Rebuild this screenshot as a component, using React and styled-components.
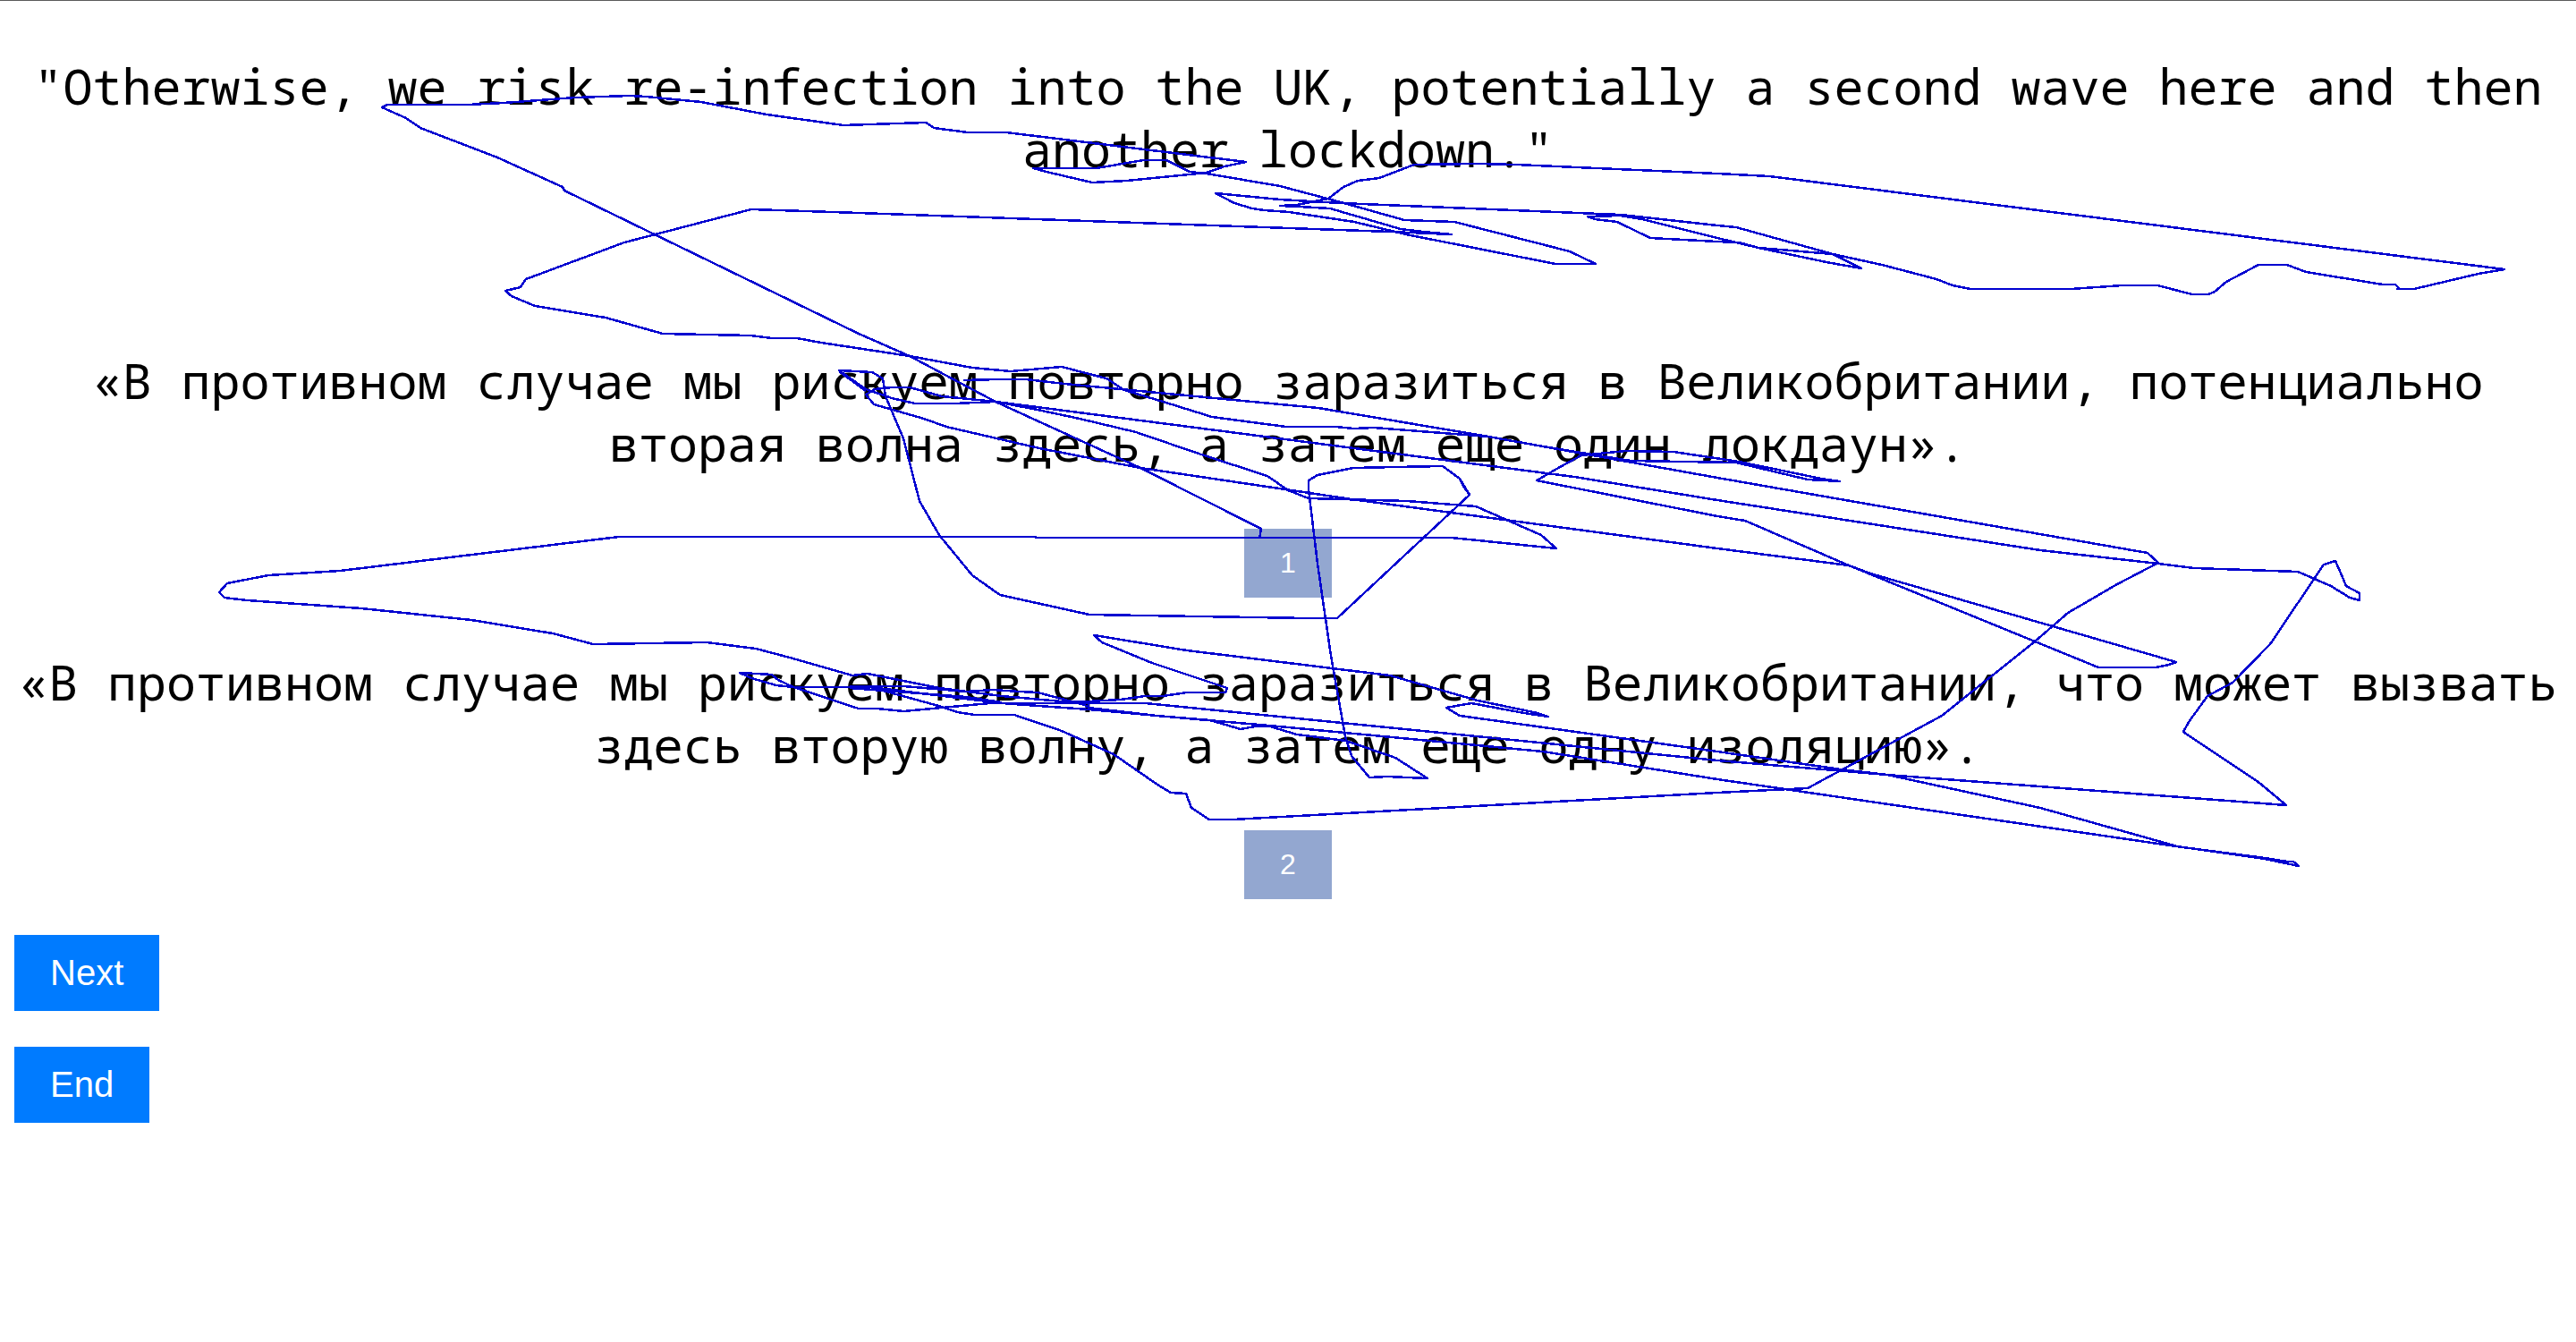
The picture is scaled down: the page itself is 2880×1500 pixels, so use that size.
import React from "react";
import styled, { createGlobalStyle } from "styled-components";

const GlobalStyle = createGlobalStyle`
  body {
    margin: 0;
    background: #fff;
  }
`;

const Page = styled.main`
  position: relative;
  box-sizing: border-box;
  border-top: 1px solid #5a5a5a;
  padding: 60px 16px 40px;
`;

const Sentence = styled.p`
  margin: 0;
  color: #000;
  font-family: "Noto Sans Mono", "DejaVu Sans Mono", monospace;
  font-size: 55px;
  line-height: 70px;
  text-align: center;
`;

const Source = styled.header`
  margin-bottom: 189px;
`;

const Options = styled.section`
  display: flex;
  flex-direction: column;
  gap: 59px;
`;

const Option = styled.article`
  display: flex;
  flex-direction: column;
  align-items: center;
  gap: 61px;
`;

const Button = styled.button`
  border: 0;
  border-radius: 0;
  padding: 20px 40px;
  color: #fff;
  font-family: "Liberation Sans", Arial, sans-serif;
  cursor: pointer;
`;

const ChoiceButton = styled(Button)`
  background: #93a7d0;
  font-size: 32px;
  line-height: 37px;
`;

const ActionButton = styled(Button)`
  background: #007bff;
  font-size: 40px;
  line-height: 45px;
`;

const Actions = styled.nav`
  display: flex;
  flex-direction: column;
  align-items: flex-start;
  gap: 40px;
  margin-top: 40px;
`;

const GazeOverlay = styled.svg`
  position: absolute;
  top: -1px;
  left: 0;
  width: 100%;
  height: auto;
  pointer-events: none;
  fill: none;
  stroke: #0000d0;
  stroke-width: 2.5;
  stroke-linejoin: round;
  shape-rendering: crispEdges;
`;

const options = [
  {
    id: 1,
    text: "«В противном случае мы рискуем повторно заразиться в Великобритании, потенциально вторая волна здесь, а затем еще один локдаун».",
  },
  {
    id: 2,
    text: "«В противном случае мы рискуем повторно заразиться в Великобритании, что может вызвать здесь вторую волну, а затем еще одну изоляцию».",
  },
];

/* Recorded gaze trail, split into consecutive stretches. */
const trail = [
  "1408,602 1410,591 1275,523 1113,449 1017,398 960,373 631,213 629,209 556,176 470,143 454,132 427,120 433,117 523,117 563,115 643,109 704,107 722,108 784,114 857,128 943,140 1003,138 1035,137 1044,143 1082,148 1125,148 1393,181 1369,186 1349,193 1260,202 1221,204 1174,193 1155,188 1226,188 1278,179 1304,179 1330,192 1349,194 1431,208 1499,226 1570,246 1626,248 1755,281 1784,295 1739,295 1572,262 1514,248 1441,237 1413,235 1400,233 1380,227 1359,216 1431,223 1499,227 1812,240 1920,252 1941,254 2049,284 2081,300 2042,293 1966,277 1920,266 1836,245 1812,241 1775,242 1783,245 1808,248 1845,266 1920,270 1944,271 1966,277 2049,284 2104,296 2165,312 2183,319 2203,323 2315,323 2373,319 2412,319 2451,329 2469,329 2476,326 2489,315 2525,296 2557,296 2578,304 2664,318 2678,318 2683,323 2680,323 2699,323 2771,306 2800,301 1978,197 1920,194 1695,184 1652,183 1581,184 1542,199 1518,202 1502,209 1485,222 1450,229 1431,230 1453,231 1487,233 1566,256 1591,259 1623,262 1554,259 960,238 840,234 698,271 588,312 582,321 565,325 572,331 598,342 677,355 741,373 839,375 863,378 891,378 918,383 1017,398 1087,411 1130,415 1187,410 1237,423 1257,436 1297,448 1355,466 1400,472 1438,477 1493,477 1514,479 1536,478 1664,488 1725,499 1823,515 1941,517 2021,536 2057,538 2036,535 1944,516 1871,505 1817,504 1768,509 1744,522 1718,537 1920,577 1951,582 2067,632 2346,746 2410,746 2425,743 2433,740 2091,641 2067,632 1920,613 1511,558 1275,523 1162,501 1058,477 1033,468 977,452 968,441 978,435 997,433 1017,433 1053,443 1113,449 1160,458 1207,468 1270,483 1343,508 1417,532 1440,548 1463,557 1573,560 1650,566 1723,598 1740,613 1623,601 1158,601 1158,600 692,600 380,638 300,643 254,652 245,662 251,668 276,671 404,680 527,693 618,708 663,720 790,718 845,725 883,735 953,755 970,753 1050,769 1120,778 1187,784 1217,784 1253,782 1280,778 1300,778 1327,774 1370,774 1372,769 1288,741 1232,718 1223,710 1327,727 1554,755 1652,783 1719,797 1731,801 1704,797 1645,786 1617,791 1632,800 1920,840 2058,860 2110,866 2281,903 2434,946 2532,960 2570,968 2564,963 2557,963 2532,959 2440,947 1920,871 1725,840 1419,811 1327,803 1217,793 1120,786 973,768 950,768",
  "1077,425 1117,424 1147,424 1190,429 1400,449 1474,456 1664,488 1725,499 1920,534 2401,618 2413,629 2367,653 2312,685 2275,717 2171,800 2021,881 1920,886 1379,916 1352,916 1332,903 1326,887 1309,886 1294,877 1245,843 1187,817 1134,799 1090,799 1070,796 1053,790 973,768 887,768 868,766 840,758 827,752 863,754 870,760 887,768 960,792 980,792 1010,795 1053,791 1107,786 1280,786 1460,804 1920,850 2122,867 2556,900 2526,875 2441,818 2447,807 2468,778 2496,763 2538,720 2598,631 2611,627 2618,643 2623,655 2638,663 2638,671 2627,668 2606,655 2569,639 2453,635 2413,630 2281,615 1920,559 1760,533 1360,481 1113,449 1067,451 1023,451 997,445 968,435 938,414 975,416 987,423 990,443 1010,490 1028,560 1050,598 1087,643 1118,665 1218,687 1462,691 1495,691 1643,553 1637,545 1632,535 1613,521 1560,522 1513,523 1473,531 1463,537 1463,547 1473,630 1488,733 1504,823 1511,845 1531,869 1551,868 1596,870 1560,847 1505,828 1450,821 1420,812 1403,812 1387,815 1353,805 1293,800 1217,791 1213,788 1160,774 1140,773 1110,771 1080,773 1010,767 950,767",
  "938,415 968,437",
  "950,769 1080,779 1120,785",
  "1217,784 1217,793",
  "1613,521 1632,535 1643,553 1495,691",
];

export default function App() {
  return (
    <>
      <GlobalStyle />
      <Page>
        <Source>
          <Sentence lang="en">
            "Otherwise, we risk re-infection into the UK, potentially a second
            wave here and then another lockdown."
          </Sentence>
        </Source>
        <Options>
          {options.map((option) => (
            <Option key={option.id}>
              <Sentence lang="ru" id={`option-${option.id}`}>
                {option.text}
              </Sentence>
              <ChoiceButton
                type="button"
                aria-describedby={`option-${option.id}`}
              >
                {option.id}
              </ChoiceButton>
            </Option>
          ))}
        </Options>
        <Actions>
          <ActionButton type="button">Next</ActionButton>
          <ActionButton type="button">End</ActionButton>
        </Actions>
        <GazeOverlay viewBox="0 0 2880 1200" aria-hidden="true">
          {trail.map((points) => (
            <polyline key={points} points={points} />
          ))}
        </GazeOverlay>
      </Page>
    </>
  );
}
